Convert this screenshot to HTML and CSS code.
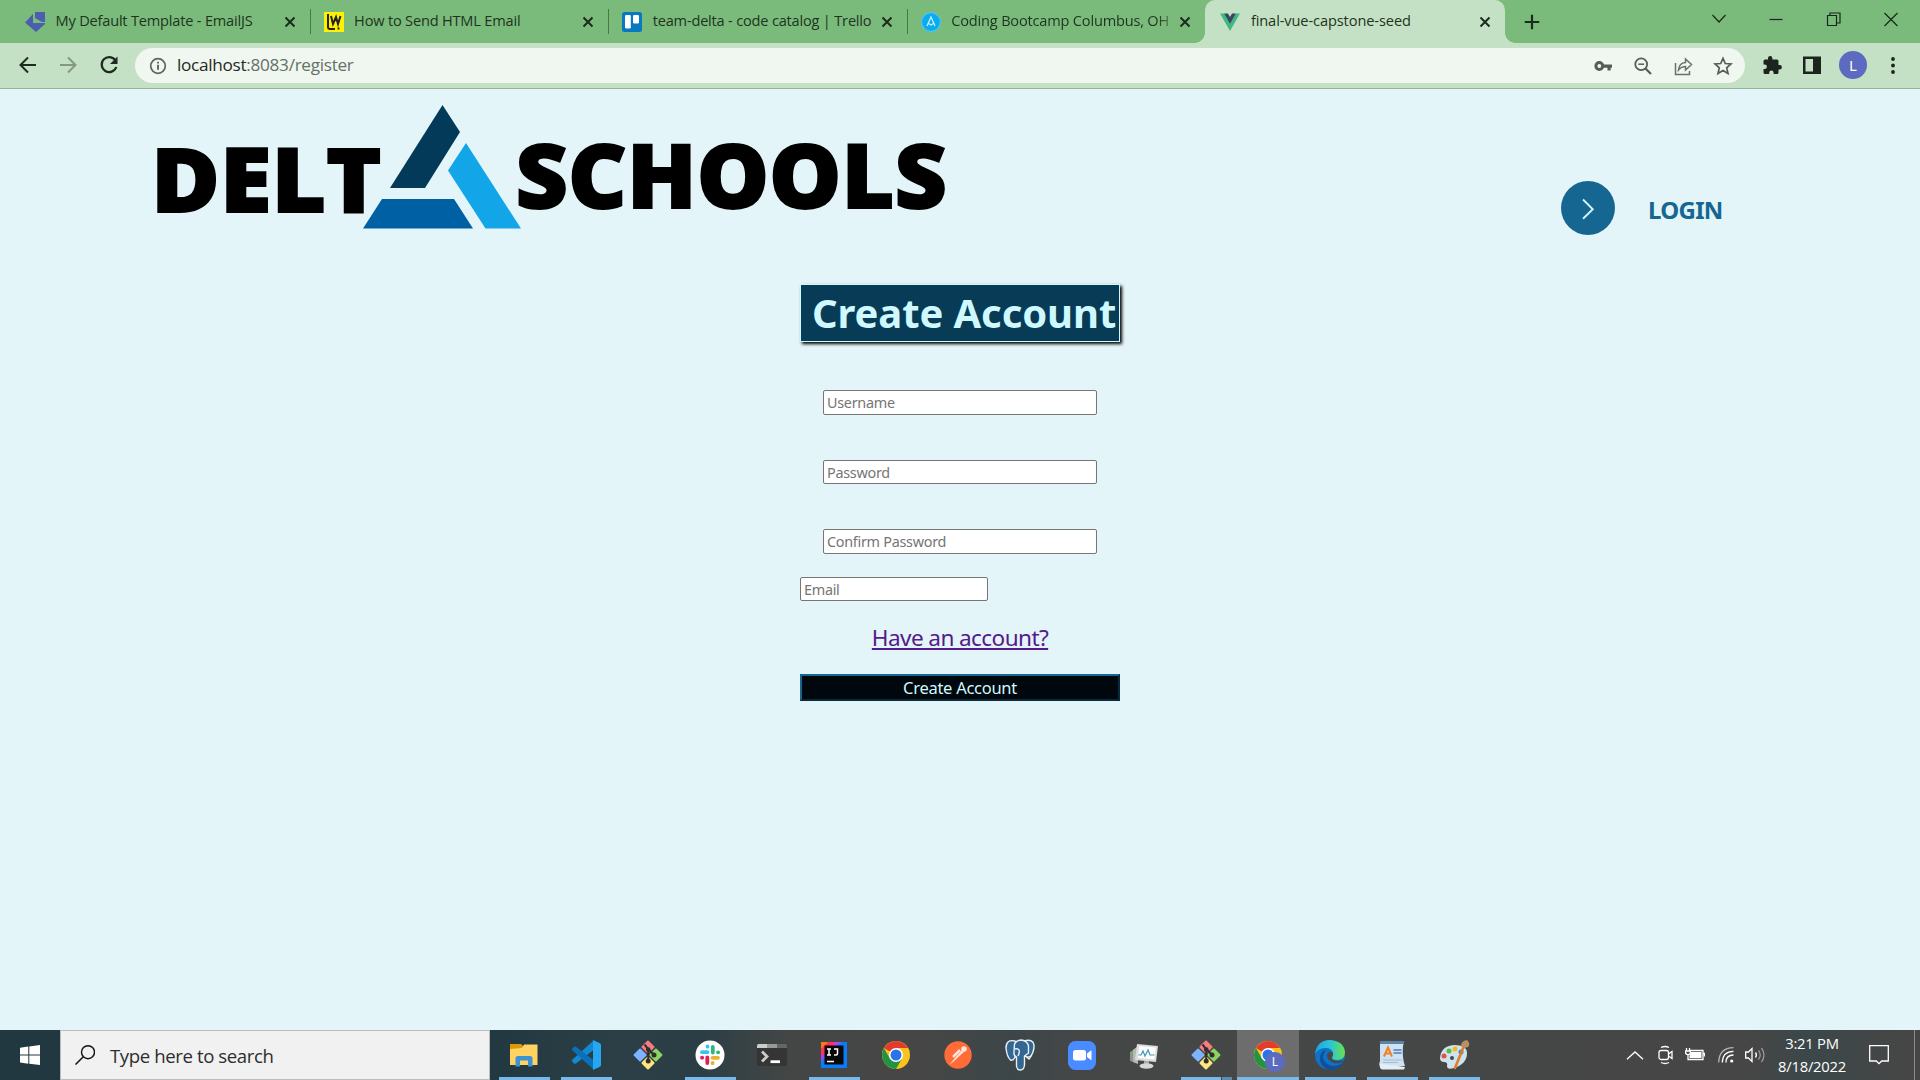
FILE: index.html
```html
<!DOCTYPE html>
<html lang="en">
<head>
<meta charset="utf-8">
<title>final-vue-capstone-seed</title>
<link rel="stylesheet" href="styles.css">
</head>
<body>
<svg width="0" height="0" class="defs" aria-hidden="true">
  <defs>
    <symbol id="close" viewBox="0 0 12 12"><path d="M1.5 1.5l9 9M10.5 1.5l-9 9" stroke="#1c2b1d" stroke-width="2" fill="none"/></symbol>
    <symbol id="git" viewBox="0 0 36 36">
      <g transform="rotate(45 18 18)">
        <rect x="7.5" y="7.5" width="9.8" height="9.8" rx="1" fill="#f77b7f"/>
        <rect x="18.7" y="7.5" width="9.8" height="9.8" rx="1" fill="#8dd35f"/>
        <rect x="7.5" y="18.7" width="9.8" height="9.8" rx="1" fill="#80b3ff"/>
        <rect x="18.7" y="18.7" width="9.8" height="9.8" rx="1" fill="#ffe680"/>
      </g>
      <path d="M14.500 7.500l3.700 4.500v12.500M18.200 12l6 6" fill="none" stroke="#302e2e" stroke-width="2"/>
      <circle cx="18.200" cy="12.500" r="2.300" fill="#302e2e"/><circle cx="18.200" cy="24" r="2.500" fill="#302e2e"/><circle cx="24" cy="18" r="2.500" fill="#302e2e"/>
    </symbol>
    <symbol id="chrome" viewBox="0 0 28 28">
      <circle cx="14" cy="14" r="14" fill="#fcc31e"/>
      <path d="M14 14L1.880 7A14 14 0 0 1 26.120 7L14 7z" fill="#e33b2e"/>
      <path d="M1.880 7A14 14 0 0 0 14 28L20.060 17.500 14 14 7.940 17.500z" fill="#229342"/>
      <circle cx="14" cy="14" r="7" fill="#fff"/><circle cx="14" cy="14" r="5.500" fill="#2a73e8"/>
    </symbol>
  </defs>
</svg>

<header class="browser">
  <div class="tabstrip">
    <div class="tab">
      <svg class="fav" viewBox="0 0 20 20"><path d="M10 0h10v10h-3l-7-4z" fill="#4a5fae"/><path d="M8 2v9h12v1L11 20 0 10.500z" fill="#4a5fae"/></svg>
      <span class="tab-title">My Default Template - EmailJS</span><svg class="x"><use href="#close"/></svg>
    </div>
    <div class="tab">
      <svg class="fav" viewBox="0 0 20 20"><path fill="#fff200" d="M0 0h20v20H0z"/><path d="M4 2v13q0 2 2 2h5M7 4l2 8 3-7 2 7 2.500-8M14.500 15.500v2" fill="none" stroke="#222" stroke-width="2"/></svg>
      <span class="tab-title">How to Send HTML Email</span><svg class="x"><use href="#close"/></svg>
    </div>
    <div class="tab">
      <svg class="fav" viewBox="0 0 20 20"><rect width="20" height="20" rx="2.500" fill="#0779bf"/><rect x="3" y="3" width="5.800" height="13.500" rx="1.200" fill="#fff"/><rect x="11" y="3" width="6" height="8.500" rx="1.200" fill="#fff"/></svg>
      <span class="tab-title">team-delta - code catalog | Trello</span><svg class="x"><use href="#close"/></svg>
    </div>
    <div class="tab last">
      <svg class="fav" viewBox="0 0 20 20"><circle cx="10" cy="10" r="10" fill="#4fc3f4"/><circle cx="10" cy="10" r="8.800" fill="#08adef"/><path d="M6 14l4-9 4 9M7 11l3 2 3-2" fill="none" stroke="#c9efff" stroke-width="1.300"/></svg>
      <span class="tab-title fade">Coding Bootcamp Columbus, OH</span><svg class="x"><use href="#close"/></svg>
    </div>
    <div class="tab active">
      <svg class="fav" viewBox="0 0 20 20"><path d="M0 1.500h4L10 12l6-10.500h4L10 19z" fill="#41b883"/><path d="M4 1.500h4l2 3.500 2-3.500h4L10 12z" fill="#35495e"/></svg>
      <span class="tab-title">final-vue-capstone-seed</span><svg class="x"><use href="#close"/></svg>
    </div>
    <svg class="plus" viewBox="0 0 16 16"><path d="M8 .7v14.600M.7 8h14.600" stroke="#1b2b1c" stroke-width="2.200"/></svg>
    <div class="winctl">
      <svg viewBox="0 0 20 20"><path d="M3.500 6l6.500 7 6.500-7" /></svg>
      <svg viewBox="0 0 20 20"><path d="M3.500 10.500h13"/></svg>
      <svg viewBox="0 0 20 20"><path d="M3.500 6.500h9v10h-9zM6 6.500v-2.500h10v10h-3.500"/></svg>
      <svg viewBox="0 0 20 20"><path d="M3.500 4l13 13M16.500 4l-13 13"/></svg>
    </div>
  </div>
  <div class="toolbar">
    <svg class="nav" viewBox="0 0 20 20"><path d="M18 10H3M10 2.500L2.500 10l7.500 7.500" fill="none" stroke="#1f2a20" stroke-width="2"/></svg>
    <svg class="nav" viewBox="0 0 20 20"><path d="M2 10h15M10 2.500l7.500 7.500-7.500 7.500" fill="none" stroke="#84987f" stroke-width="2"/></svg>
    <svg class="nav" viewBox="0 0 20 20"><path d="M16.500 5.500A7.500 7.500 0 1 0 17.300 12" fill="none" stroke="#1f2a20" stroke-width="2.200"/><path d="M18.500 1.500v7.500H11z" fill="#1f2a20"/></svg>
    <div class="omnibox">
      <svg class="info" viewBox="0 0 18 18"><circle cx="9" cy="9" r="7.300" fill="none" stroke="#5d655e" stroke-width="1.700"/><path d="M9 7.800v5M9 4.700v1.900" stroke="#5d655e" stroke-width="1.900"/></svg>
      <span class="url"><b>localhost</b>:8083/register</span>
      <div class="omni-icons">
        <svg viewBox="0 0 20 20"><circle cx="6.300" cy="10" r="3.400" fill="none" stroke="#555d57" stroke-width="3"/><path d="M9 8.500h10v3.200h-1.300v2.800h-3.200v-2.800H9z" fill="#555d57"/></svg>
        <svg viewBox="0 0 20 20"><circle cx="8.200" cy="8.200" r="5.900" fill="none" stroke="#555d57" stroke-width="1.800"/><path d="M5.300 8.200h5.800" stroke="#555d57" stroke-width="1.500"/><path d="M12.500 12.500l5.500 5.500" stroke="#555d57" stroke-width="2.200"/></svg>
        <svg viewBox="0 0 20 20"><path d="M2.500 7v11.500h14V15M5.500 14c.5-5 3-7.300 7-7.500V3l6 5.500-6 5.500v-3.500c-3 0-5 1-7 3.500z" fill="none" stroke="#6a726b" stroke-width="1.500"/></svg>
        <svg viewBox="0 0 20 20"><path d="M10 2.300l2.300 5.200 5.700.5-4.300 3.800 1.300 5.600-5-3-5 3 1.300-5.600L2 8l5.700-.5z" fill="none" stroke="#555d57" stroke-width="1.700"/></svg>
      </div>
    </div>
    <div class="ext">
      <svg viewBox="0 0 20 20"><path d="M8.200 1a2.200 2.200 0 0 1 2.200 2.200V4.500h4.600a1.500 1.500 0 0 1 1.500 1.500v4h1.200a2.200 2.200 0 0 1 0 4.400h-1.200v3a1.600 1.600 0 0 1-1.500 1.600h-3.400v-1.300a2.200 2.200 0 0 0-4.400 0V19H3a1.500 1.500 0 0 1-1.500-1.500V14h1.200a2.200 2.200 0 0 0 0-4.400H1.500V6A1.500 1.500 0 0 1 3 4.500h3V3.200A2.200 2.200 0 0 1 8.200 1z" fill="#1c241d"/></svg>
      <svg viewBox="0 0 20 20"><path fill-rule="evenodd" d="M1 1.500h18v17.500H1zM3.500 4v12.500h7.500V4z" fill="#1c241d"/></svg>
      <span class="avatar">L</span>
      <svg class="dots" viewBox="0 0 20 20" fill="#1c241d"><circle cx="10" cy="4" r="1.900"/><circle cx="10" cy="10.500" r="1.900"/><circle cx="10" cy="17" r="1.900"/></svg>
    </div>
  </div>
</header>

<main class="page">
  <div class="top">
    <svg class="logo" viewBox="0 0 800 130" role="img">
      <text x="-6" y="112.500" textLength="230.500" lengthAdjust="spacingAndGlyphs" class="word">DELT</text>
      <path d="M285.500 6L303 33 268 89H233z" fill="#043a59"/>
      <path d="M225 100h72l19 29.500H206z" fill="#0060a4"/>
      <path d="M309 44l55 85.500h-35.500L291 71.500z" fill="#12a6e9"/>
      <text x="358.500" y="108.500" textLength="431.500" lengthAdjust="spacingAndGlyphs" class="word">SCHOOLS</text>
    </svg>
    <div class="login">
      <svg viewBox="0 0 54 54"><circle cx="27" cy="27" r="27" fill="#156691"/><path d="M22 18.500l9.800 9.700L22 37.800" fill="none" stroke="#d2f5fb" stroke-width="1.900"/></svg>
      <span>LOGIN</span>
    </div>
  </div>
  <form class="register">
    <h1>Create Account</h1>
    <input class="field first" type="text" placeholder="Username">
    <input class="field short" type="text" placeholder="Password">
    <input class="field" type="text" placeholder="Confirm Password">
    <input class="email" type="text" placeholder="Email">
    <a href="#">Have an account?</a>
    <button type="button">Create Account</button>
  </form>
</main>

<footer class="taskbar">
  <div class="start"><svg viewBox="0 0 20 20" fill="#fff"><path d="M0 2.700l8.300-1.200V9.500H0zM9.300 1.400L20 0v9.500H9.300zM0 10.500h8.300v8.200L0 17.500zM9.300 10.500H20V20L9.300 18.700z"/></svg></div>
  <div class="search">
    <svg viewBox="0 0 20 20"><circle cx="13" cy="7.200" r="6.500" fill="none" stroke="#111" stroke-width="1.400"/><path d="M8.300 11.800L.5 19.500" stroke="#111" stroke-width="1.500"/></svg>
    <span>Type here to search</span>
  </div>
  <div class="apps">
    <div class="app run"><svg viewBox="0 0 36 36"><path d="M4 7h11l2 2v5H4z" fill="#dc9a05"/><path d="M4 12l12-1 2-3.500h13.500V28H4z" fill="#fed362"/><path d="M9.500 29.500v-8q0-2.500 2.500-2.500h12q2.500 0 2.500 2.500v8h-4.500v-6h-8v6z" fill="#3c92d3"/></svg></div>
    <div class="app run"><svg viewBox="0 0 36 36"><path d="M25.500 3.500L3.500 23.500l2.500 3q1 .7 2 0L25.500 13z" fill="#1389d4"/><path d="M25.500 32.500L3.500 12.500 6 9.700q1-.7 2 0L25.500 23z" fill="#0b70b8"/><path d="M25 3l7 3.300q1 .5 1 1.700v20q0 1.200-1 1.700L25 33z" fill="#27a7f2"/></svg></div>
    <div class="app"><svg><use href="#git"/></svg></div>
    <div class="app run"><svg viewBox="0 0 36 36"><circle cx="18" cy="18" r="14.500" fill="#fff"/><g stroke-width="3.800" stroke-linecap="round"><path d="M10 15.200h5.500M15.500 9.500v.2" stroke="#36c5f0"/><path d="M20.800 10v5.500M26 15.300h.2" stroke="#2eb67d"/><path d="M26 20.800h-5.500M20.600 26v.2" stroke="#ecb22e"/><path d="M15.300 26v-5.500M10 20.700h.2" stroke="#e01e5a"/></g></svg></div>
    <div class="app"><svg viewBox="0 0 36 36"><rect x="3" y="7" width="30" height="22" rx="1.500" fill="#353535"/><path d="M3 11V8.500Q3 7 4.500 7H13v4z" fill="#ccc"/><path d="M13 7h10v4H13z" fill="#999"/><path d="M23 7h8.500Q33 7 33 8.500V11H23z" fill="#666"/><path d="M8 14.500l5 5-5 5" fill="none" stroke="#ccc" stroke-width="2.800"/><path d="M16.500 23.300h9.500v2.800h-9.500z" fill="#fff"/></svg></div>
    <div class="app run"><svg viewBox="0 0 36 36"><path d="M5 5h26v26H5z" fill="#087cfa"/><path d="M5 5h17L5 22z" fill="#fe315d"/><path d="M5 5h7l-7 7z" fill="#f97a12"/><path d="M18 5h8l-9 6z" fill="#b648d9"/><path d="M5 18v7l6-8z" fill="#9b4be0"/><path d="M8.500 8.500h19v19h-19z" fill="#080808"/><path d="M11 12h4M13 12v6M11 18h4M18 12h3.500v4.500q0 1.500-1.500 1.500h-2M11 24.500h7" fill="none" stroke="#fff" stroke-width="1.500"/></svg></div>
    <div class="app"><svg class="s28"><use href="#chrome"/></svg></div>
    <div class="app"><svg viewBox="0 0 36 36"><circle cx="18" cy="18" r="13.700" fill="#ff6c37"/><path d="M9.500 27.500l8-9.500 4-4.500 2.500 1.500-5 4.500-6 5.500z" fill="#ffe3d8"/><circle cx="24" cy="12" r="2.800" fill="#ffe3d8"/><path d="M13 20l7-7" stroke="#ffe3d8" stroke-width="2.500"/></svg></div>
    <div class="app"><svg viewBox="0 0 36 36" fill="#336791" stroke="#e9f0f5" stroke-width="1.400"><path d="M13 4Q4 2 4 11q1 9 4.500 12 2.500 1 4-2l2-3-1-13z"/><path d="M22 4q9-2.500 10 4 .5 7-5 14l-5-4z"/><path d="M12.500 7q2-4 7-4 6 1 7 6v7l-4 3v9q-.5 5-4 5-3.500 0-4-4v-9q-3-1-2.500-5z"/><path d="M13 12q3-1 4 1t-1 6M23 19q3 2 6 0" fill="none"/></svg></div>
    <div class="app"><svg viewBox="0 0 36 36"><rect x="4" y="4" width="28" height="29" rx="7.500" fill="#4a8cff"/><rect x="9" y="13" width="13" height="10.500" rx="2.500" fill="#fff"/><path d="M23 16.500l4-3q.5-.3.500.3v9q0 .6-.5.300l-4-3z" fill="#fff"/></svg></div>
    <div class="app"><svg viewBox="0 0 36 36"><path d="M4 15l6-4v15l-6-2z" fill="#8d908d"/><path d="M7 13l5-4v18l-5-2z" fill="#b6b8b6"/><path d="M11 7l21 2-2 16-21-2z" fill="#dadbda"/><path d="M13 9l17 1.500L28.500 22.500l-16.500-1.500z" fill="#fcfcfc"/><path d="M12.500 18h2.500l2-4 2 5 3-6 2 5h4.500" fill="none" stroke="#4296bd" stroke-width="1.200"/><path d="M18 24h5v4h-5z" fill="#aaa"/><ellipse cx="20.500" cy="29" rx="7" ry="2.800" fill="#d7d7d7"/><path d="M4.500 15.500h1.500v2H4.500z" fill="#43d827"/></svg></div>
    <div class="app multi"><svg><use href="#git"/></svg></div>
    <div class="app run current"><svg class="s28"><use href="#chrome"/></svg><span class="badge">L</span></div>
    <div class="app run"><svg viewBox="0 0 36 36"><defs><linearGradient id="eg"><stop offset="0" stop-color="#1fa3e0"/><stop offset=".5" stop-color="#2cc3d8"/><stop offset="1" stop-color="#66e34f"/></linearGradient></defs><circle cx="18" cy="18" r="15" fill="#0d72c8"/><path d="M3 17Q5 3 18 3q14 1 15 12 0 8-8 8-5 0-5-2.500 2-2 1-5-2-5-8-4.500Q6 11 3 17z" fill="url(#eg)"/><path d="M14 13q-6 7 0 13 7 6 17 0-5 8-15 7-9-5-8-13 1-6 6-7z" fill="#124f96"/><path d="M20 15q-4-1-5 3 0 6 7 8 6 1 9-1 1-1 0-1.500-6 2-10.500-1-1.500-2 0-3.500 1.500-2-.5-4z" fill="#484848"/></svg></div>
    <div class="app run"><svg viewBox="0 0 36 36"><path d="M6 5h24l-1 4q-1 12 2 20H7q-3 0-1-5z" fill="#cde2f4"/><path d="M6 4h24v3H6z" fill="#5d84a5"/><path d="M6 27q14 1 25 3l-1 2.500H8q-3-1-2-5.500z" fill="#e6eef4"/><path d="M10 19.500l4-9 4 9M11.500 16.500h5" fill="none" stroke="#ef8222" stroke-width="2"/><path d="M19.500 13h8M19.500 16h8" stroke="#4b7eb8" stroke-width="1.600"/><path d="M9 23h19M9 25.500h15" stroke="#a7bccd"/></svg></div>
    <div class="app run"><svg viewBox="0 0 36 36"><path d="M4 21Q5 9 18 8q13 0 13 8 0 11-13 15-7 2-7-2 1-4-3-4-4 0-4-4z" fill="#cfe3ee"/><circle cx="8" cy="19" r="2.500" fill="#e2514a"/><circle cx="13" cy="14" r="2.500" fill="#55b947"/><circle cx="19" cy="12" r="2.500" fill="#f5b921"/><circle cx="25" cy="15" r="2.500" fill="#3a86d1"/><circle cx="16" cy="21" r="2" fill="#3a4b55"/><path d="M28 9l-9 22" stroke="#d9822a" stroke-width="2.600" stroke-linecap="round"/><path d="M25 9q0-5 6-6 4 4 1 7-4 2-7-1z" fill="#b99062"/></svg></div>
  </div>
  <div class="tray">
    <svg class="up" viewBox="0 0 18 9"><path d="M1 8.300L9 1l8 7.300"/></svg>
    <svg class="cam" viewBox="0 0 16 20"><rect x="1" y="5.500" width="9.500" height="9" rx="2"/><path d="M10.500 9l3.500-2.500v7L10.500 11M3 2.500q4-2 8 0M3 17.500q4 2 8 0"/></svg>
    <svg class="bat" viewBox="0 0 20 14"><path d="M5 2.500h13v9H3V7M18.500 5.500h1v3M1.500 0v2.500M4.500 0v2.500M.7 3h4.600v2.500Q3 8 .7 5.500z"/><path d="M6 4h10.500v6H4.500V8z" fill="#fff" stroke="none"/></svg>
    <svg class="wifi" viewBox="0 0 16 16"><g stroke-width="1.300"><path d="M.7 15.500Q1 1 15.500.7" opacity=".6"/><path d="M4.300 15.500Q4.500 4.500 15.500 4.300"/><path d="M8 15.500Q8 8 15.500 8"/></g><circle cx="13.700" cy="14" r="1.600" fill="#fff" stroke="none"/></svg>
    <svg class="vol" viewBox="0 0 21 18"><path d="M.7 6h2.800L7 2.500v13L3.500 12H.7z"/><path d="M10.500 6.500q1.800 2.500 0 5"/><path d="M13.500 4.500q3.500 4.500 0 9M16.500 2q5 7 0 14" opacity=".45"/></svg>
    <div class="clock"><span>3:21 PM</span><span>8/18/2022</span></div>
    <svg class="note" viewBox="0 0 20 20"><path d="M.7.7h18.600v15.300h-6.600L10 18.700 7.300 16H.7z"/></svg>
    <i class="peek"></i>
  </div>
</footer>
</body>
</html>
```
FILE: styles.css
```css
* { box-sizing: border-box; }
body {
  margin: 0; width: 1920px; height: 1080px; overflow: hidden;
  display: flex; flex-direction: column;
  background: #e3f5f8; font-family: "Noto Sans", "Open Sans", sans-serif;
}
.defs { position: absolute; }
svg { display: block; flex: none; }

/* browser chrome */
.browser { flex: none; height: 89px; background: #c5e1c5; border-bottom: 1px solid #94b296; }
.tabstrip { height: 43px; background: #7abb7c; display: flex; align-items: center; padding-left: 11px; }
.tab {
  width: 298.6px; height: 43px; display: flex; align-items: center; padding: 0 10px 0 14px;
  font-family: "Open Sans", sans-serif; font-size: 14.6px; letter-spacing: -0.2px; color: #1e3420; position: relative;
}
.tab:not(.last):not(.active)::after { content: ""; position: absolute; right: -1px; top: 9px; width: 1px; height: 25px; background: #4a764c; }
.fav { width: 20px; height: 20px; }
.tab-title { margin: -3px 0 0 10.5px; flex: 1; white-space: nowrap; line-height: 24px; }
.fade { -webkit-mask-image: linear-gradient(90deg, #000 90%, transparent 101%); mask-image: linear-gradient(90deg, #000 90%, transparent 101%); }
.x { width: 12px; height: 12px; margin-right: 4px; }
.tab.active { background: #c5e1c5; border-radius: 10px 10px 0 0; width: 300px; padding-left: 15px; letter-spacing: -0.1px; }
.tab.active::before, .tab.active::after { content: ""; position: absolute; bottom: 0; width: 10px; height: 10px; }
.tab.active::before { left: -10px; background: radial-gradient(circle at 0 0, transparent 9.5px, #c5e1c5 10px); }
.tab.active::after { right: -10px; background: radial-gradient(circle at 100% 0, transparent 9.5px, #c5e1c5 10px); }
.plus { width: 16px; height: 16px; margin-left: 19px; }
.winctl { margin: -6px 19px 0 auto; display: flex; gap: 37.3px; }
.winctl svg { width: 20px; height: 20px; fill: none; stroke: #17281a; stroke-width: 1.2; }

.toolbar { height: 44px; display: flex; align-items: center; padding-left: 17.5px; }
.nav { width: 20px; height: 20px; margin-right: 20.5px; }
.omnibox { width: 1610px; height: 35px; margin: 1px 0 0 -4px; border-radius: 18px; background: #f0f7f0; display: flex; align-items: center; padding-left: 13.5px; }
.info { width: 18px; height: 18px; }
.url { margin: -2px 0 0 10.5px; font: 17.2px/24px "Open Sans", sans-serif; letter-spacing: -0.3px; color: #657067; white-space: nowrap; }
.url b { font-weight: 400; color: #1f2a20; }
.omni-icons { margin: 0 12.5px 0 auto; display: flex; gap: 20px; }
.omni-icons svg, .ext svg { width: 20px; height: 20px; }
.ext { display: flex; align-items: center; margin-left: 17px; gap: 20px; }
.ext .dots { margin-left: -1.5px; }
.avatar { width: 28px; height: 28px; margin: 0 -3px; border-radius: 50%; background: #5c6bc0; color: #fff; font-size: 15px; line-height: 28px; text-align: center; }

/* page */
.page { flex: 1; }
.top { display: flex; height: 195px; padding-left: 157px; align-items: flex-start; }
.logo { width: 800px; height: 130px; margin-top: 10px; overflow: visible; }
.word { font-family: "Open Sans", sans-serif; font-weight: 800; font-size: 89px; stroke: #000; stroke-width: 1.8; }
.login { display: flex; align-items: center; margin: 92px 0 0 604px; gap: 33px; color: #156691; font-weight: 700; font-size: 24px; }
.login span { letter-spacing: -0.7px; margin-top: 2px; }
.login svg { width: 54px; height: 54px; }
.register { width: 320px; margin: 0 auto; display: flex; flex-direction: column; align-items: center; }
.register h1 {
  width: 320px; height: 58px; margin: 0 0 48px; padding-left: 11px; border: 1px solid #cff8ff;
  background: #073b56; color: #cff8ff; box-shadow: 2px 2px 3px #000; white-space: nowrap;
  font-size: 40px; line-height: 56px; letter-spacing: -0.1px;
}
input { font-family: "Noto Sans", sans-serif; font-size: 14.4px; letter-spacing: -0.28px; padding: 1px 3px; border: 1px solid #767676; border-radius: 2px; background: #fff; margin: 0; }
input::placeholder { color: #757575; }
.field { width: 274px; height: 25px; margin-bottom: 45px; }
.field.first { padding-bottom: 2px; }
.field.short { height: 24px; }
.register .email { width: 188px; height: 24px; align-self: flex-start; margin-top: -22px; }
.register a { margin-top: 20px; height: 34px; line-height: 34px; font-size: 22.6px; letter-spacing: -0.6px; color: #551a8b; text-decoration: underline; }
button { width: 320px; height: 27px; margin-top: 19px; padding: 1px 0 0; border: 2px outset #156691; background: #00070d; color: #d0f8ff; font: 16.5px/22px "Noto Sans", sans-serif; letter-spacing: -0.27px; }

/* taskbar */
.taskbar { flex: none; height: 50px; display: flex; color: #fff; background: linear-gradient(90deg, #213840 0 480px, #2c3f46 620px, #2b3e45 700px, #444645 790px, #464646 930px, #3c4648 1010px, #454747 1080px, #464646 1750px, #3b4749 1810px, #464646 1900px); }
.start { width: 60px; padding: 15px 20px; }
.start svg { width: 20px; height: 20px; }
.search { width: 430px; border: 1px solid #bcbcbc; background: #f1f1f1; color: #2d2d2d; display: flex; align-items: center; padding-left: 14px; gap: 15px; font: 18.6px "Open Sans", sans-serif; letter-spacing: -0.4px; }
.search svg { width: 20px; height: 20px; }
.apps { display: flex; margin-left: 3px; }
.app { width: 62px; height: 50px; display: flex; align-items: center; justify-content: center; position: relative; }
.app svg { width: 36px; height: 36px; }
.app .s28 { width: 28px; height: 28px; }
.run::after, .multi::after { content: ""; position: absolute; left: 6px; right: 5px; bottom: 0; height: 3px; background: #76b9ed; }
.multi::after { background: linear-gradient(90deg, #76b9ed 0 40px, #464646 40px 41px, #5d8cb0 41px); }
.current { background: #6d6d6d; }
.current::after { left: 0; right: 0; }
.badge { position: absolute; left: 28px; top: 22px; width: 20px; height: 20px; border-radius: 50%; background: #5c6bc0; font-size: 12px; line-height: 20px; text-align: center; }
.tray { flex: 1; display: flex; align-items: center; margin-left: 141px; }
.tray svg { fill: none; stroke: #fff; stroke-width: 1.3; }
.up { width: 18px; height: 9px; }
.cam { width: 16px; height: 20px; margin-left: 14px; }
.bat { width: 20px; height: 14px; margin-left: 11px; }
.wifi { width: 16px; height: 16px; margin-left: 13px; }
.vol { width: 21px; height: 18px; margin-left: 11px; }
.clock { width: 80px; margin-left: 6px; display: flex; flex-direction: column; align-items: center; font: 14.8px/23px "Open Sans", sans-serif; letter-spacing: -0.25px; }
.note { width: 20px; height: 20px; margin-left: 17px; }
.peek { width: 1px; height: 50px; margin-left: 25px; background: #8a8a8a; }
```
